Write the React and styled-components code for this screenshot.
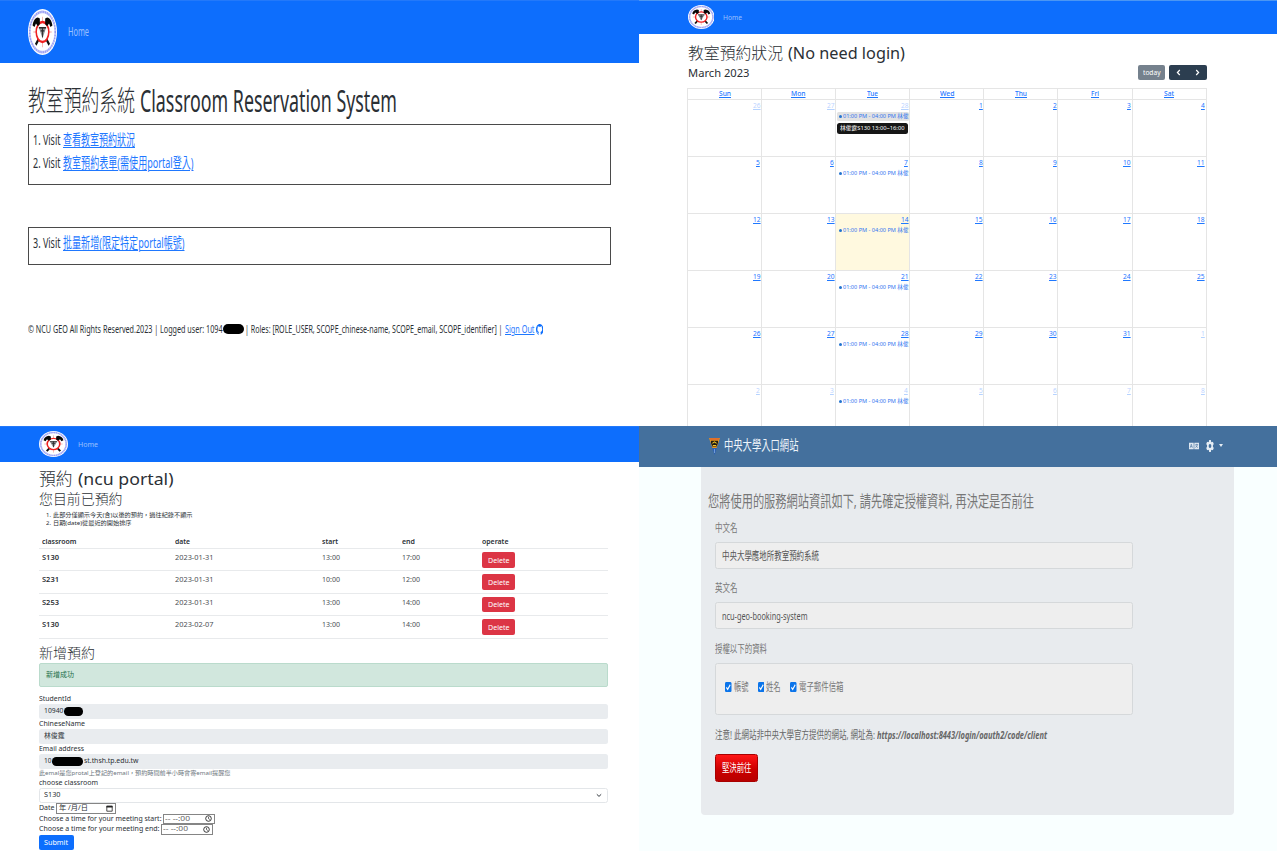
import React, { useLayoutEffect, useRef, useState } from "react";
import styled, { createGlobalStyle, css } from "styled-components";

const Global = createGlobalStyle`
  *, *::before, *::after { box-sizing: border-box; }
  html, body { margin: 0; padding: 0; background: #fff; }
  body {
    width: 1277px;
    height: 851px;
    overflow: hidden;
    font-family: "Noto Sans", "Noto Sans CJK TC", sans-serif;
    color: #2b3035;
  }
`;

/* ---------- text squeezed or stretched to a column width ---------- */

const FitBox = styled.span`
  display: block;
  flex: none;
  width: ${(p) => p.$w}px;
  height: ${(p) => p.$size * 1.4}px;
  margin-left: ${(p) => p.$ml || 0}px;
  font-size: ${(p) => p.$size}px;
  line-height: 1.4;
  white-space: pre;
  color: ${(p) => p.$color || "inherit"};
  font-weight: ${(p) => p.$weight || "inherit"};
  font-style: ${(p) => (p.$italic ? "italic" : "normal")};
`;

const FitInner = styled.span`
  display: inline-block;
  transform-origin: 0 50%;
  ${(p) =>
    p.$link &&
    css`
      text-decoration: underline;
      text-decoration-thickness: ${p.$thick || 1}px;
      text-underline-offset: ${p.$offset || 1}px;
    `}
`;

function Fit({ w, size, ml, color, weight, italic, link, thick, offset, children }) {
  const ref = useRef(null);
  const [scale, setScale] = useState(1);
  useLayoutEffect(() => {
    const node = ref.current;
    const previous = node.style.transform;
    node.style.transform = "none";
    const natural = node.getBoundingClientRect().width;
    node.style.transform = previous;
    if (natural > 0) setScale(w / natural);
  }, [w, size, children]);
  return (
    <FitBox $w={w} $size={size} $ml={ml} $weight={weight} $italic={italic} $color={color || (link ? "#1f78ff" : undefined)}>
      <FitInner ref={ref} $link={link} $thick={thick} $offset={offset} style={{ transform: `scaleX(${scale})` }}>
        {children}
      </FitInner>
    </FitBox>
  );
}

/* ---------- shared parts ---------- */

const Board = styled.main`
  display: grid;
  grid-template-columns: 639px 638px;
  grid-template-rows: 426px 425px;
  width: 1277px;
  height: 851px;
`;

const Panel = styled.section`
  display: flex;
  flex-direction: column;
  min-width: 0;
  overflow: hidden;
  background: ${(p) => p.$bg || "#fff"};
`;

const Nav = styled.nav`
  display: flex;
  flex: none;
  align-items: center;
  height: ${(p) => p.$h}px;
  padding: 0 0 ${(p) => p.$pb || 0}px ${(p) => p.$pad}px;
  background: #0d6efd;
  border-top: 1px solid ${(p) => p.$edge || "#2379fa"};
`;

const Line = styled.div`
  display: flex;
  flex: none;
  align-items: center;
  height: ${(p) => p.$h}px;
  margin-top: ${(p) => p.$mt || 0}px;
  padding-left: ${(p) => p.$pl || 0}px;
`;

const Redacted = styled.span`
  flex: none;
  width: ${(p) => p.$w}px;
  height: ${(p) => p.$h}px;
  border-radius: ${(p) => p.$h / 2}px;
  background: #000;
`;

const Emblem = styled.svg`
  display: block;
  flex: none;
  width: ${(p) => p.$w}px;
  height: ${(p) => p.$h}px;
  margin-right: ${(p) => p.$mr}px;
`;

function Crest({ w, h, mr }) {
  return (
    <Emblem $w={w} $h={h} $mr={mr} viewBox="0 0 60 60" preserveAspectRatio="none">
      <circle cx="30" cy="30" r="30" fill="#fff" />
      <circle cx="30" cy="30" r="26.4" fill="none" stroke="#c3c6fa" strokeWidth="3.6" />
      <circle cx="30" cy="30" r="26.4" fill="none" stroke="#8f95ee" strokeWidth="2.6" strokeDasharray="1.6 2.2" />
      <path d="M30 10v40M11 30h38" stroke="#f3a39b" strokeWidth="1.5" />
      <path d="M19.500 17L44 46.500M40.500 17L16 46.500" stroke="#111" strokeWidth="4" />
      <circle cx="30" cy="30" r="13" fill="#fff" stroke="#f02020" strokeWidth="3.2" />
      <path d="M9.500 21.500c1-5.500 5-10 11-10.500l4 1.500v7l-4 3-4-3.500-3 4.500zM50.500 21.500c-1-5.500-5-10-11-10.500l-4 1.500v7l4 3 4-3.500 3 4.500z" fill="#080808" />
      <path d="M22.500 24h15L30 38.500z" fill="#8b8d90" />
      <path d="M22.500 24.500h15M26.500 28.500h7M30 24v13" stroke="#2a2a2a" strokeWidth="1.8" />
    </Emblem>
  );
}

const HOME = "rgba(255,255,255,.58)";

/* ---------- landing page ---------- */

const LinkBox = styled.div`
  display: flex;
  flex: none;
  flex-direction: column;
  width: 583px;
  height: ${(p) => p.$h}px;
  margin: ${(p) => p.$mt}px 0 0 28px;
  padding: 3px 0 0 4px;
  border: 1px solid #4a4a4a;
`;

const GitMark = styled.svg`
  display: block;
  flex: none;
  width: 7.5px;
  height: 11px;
  margin-left: 1.5px;
`;

const VISITS = [
  ["1. Visit", "查看教室預約狀況", 72],
  ["2. Visit", "教室預約表單(需使用portal登入)", 130.5],
];

function VisitLine({ label, text, w }) {
  return (
    <Line $h={22.6}>
      <Fit w={27.5} size={14.5}>{label}</Fit>
      <Fit w={w} size={14.5} ml={2} link offset={1.5}>{text}</Fit>
    </Line>
  );
}

function Landing() {
  return (
    <Panel>
      <Nav $h={63} $pad={28} $pb={1}>
        <Crest w={29} h={46} mr={11} />
        <Fit w={21} size={13} color={HOME}>Home</Fit>
      </Nav>
      <Line $h={44} $mt={16} $pl={28}>
        <Fit w={107} size={28} weight={300}>教室預約系統</Fit>
        <Fit w={257} size={30} ml={5}>Classroom Reservation System</Fit>
      </Line>
      <LinkBox $h={61} $mt={1}>
        {VISITS.map(([label, text, w]) => (
          <VisitLine key={label} label={label} text={text} w={w} />
        ))}
      </LinkBox>
      <LinkBox $h={38} $mt={42}>
        <VisitLine label="3. Visit" text="批量新增(限定特定portal帳號)" w={121.5} />
      </LinkBox>
      <Line $h={20} $mt={54} $pl={28}>
        <Fit w={194.5} size={11.5}>© NCU GEO All Rights Reserved.2023 | Logged user: 1094</Fit>
        <Redacted $w={21.5} $h={10} />
        <Fit w={257.5} size={11.5} ml={1}>| Roles: [ROLE_USER, SCOPE_chinese-name, SCOPE_email, SCOPE_identifier] |</Fit>
        <Fit w={29.5} size={11.5} ml={2} link>Sign Out</Fit>
        <GitMark viewBox="0 0 16 16" preserveAspectRatio="none">
          <path
            fill="#0d6efd"
            d="M8 0C3.58 0 0 3.58 0 8c0 3.54 2.29 6.53 5.47 7.59.4.07.55-.17.55-.38v-1.49c-2.01.37-2.53-.49-2.69-.94-.09-.23-.48-.94-.82-1.13-.28-.15-.68-.52-.01-.53.63-.01 1.08.58 1.23.82.72 1.21 1.87.87 2.33.66.07-.52.28-.87.51-1.07-1.78-.2-3.64-.89-3.64-3.95 0-.87.31-1.59.82-2.15-.08-.2-.36-1.02.08-2.12 0 0 .67-.21 2.2.82a7.6 7.6 0 0 1 4 0c1.53-1.04 2.2-.82 2.2-.82.44 1.1.16 1.92.08 2.12.51.56.82 1.27.82 2.15 0 3.07-1.87 3.75-3.65 3.95.29.25.54.73.54 1.48v2.2c0 .21.15.46.55.38A8 8 0 0 0 16 8c0-4.42-3.58-8-8-8"
          />
        </GitMark>
      </Line>
    </Panel>
  );
}

/* ---------- calendar page ---------- */

const CalendarBar = styled.div`
  display: flex;
  flex: none;
  align-items: center;
  width: 568px;
  height: 15px;
  padding-left: 48.5px;
`;

const TodayButton = styled.span`
  display: flex;
  align-items: center;
  justify-content: center;
  width: 27px;
  height: 15px;
  margin-left: auto;
  border-radius: 2px;
  background: #75818d;
`;

const ArrowGroup = styled.span`
  display: flex;
  align-items: center;
  justify-content: space-around;
  width: 38px;
  height: 15px;
  margin-left: 4px;
  border-radius: 2px;
  background: #2c3e50;
`;

const Arrow = styled.svg`
  width: 5px;
  height: 7px;
`;

const CalendarGrid = styled.div`
  display: grid;
  flex: none;
  grid-template-columns: repeat(7, 74.1px);
  grid-template-rows: 11px repeat(6, 57px);
  width: 520px;
  margin: 8px 0 0 48px;
  border: solid #e5e5e5;
  border-width: 1px 0 0 1px;
`;

const DayName = styled.div`
  display: flex;
  align-items: center;
  justify-content: center;
  border: solid #e5e5e5;
  border-width: 0 1px 1px 0;
`;

const DayCell = styled.div`
  display: flex;
  flex-direction: column;
  border: solid #e5e5e5;
  border-width: 0 1px 1px 0;
  background: ${(p) => (p.$today ? "#fff9df" : "transparent")};
`;

const DayNumber = styled.div`
  display: flex;
  align-items: center;
  justify-content: flex-end;
  height: 12px;
  padding-right: 1px;
  opacity: ${(p) => (p.$other ? 0.32 : 1)};
`;

const Event = styled.div`
  display: flex;
  align-items: center;
  width: 72px;
  height: 9px;
  margin: 0 0 0 1px;
  padding-left: 1.5px;
  border-radius: 1.5px;
  background: ${(p) => (p.$hover ? "#e2e2e2" : "transparent")};
`;

const Dot = styled.i`
  width: 3px;
  height: 3px;
  border-radius: 50%;
  background: #2273cf;
`;

const Tooltip = styled.div`
  display: flex;
  align-items: center;
  width: 71px;
  height: 11px;
  margin: 2px 0 0 1px;
  padding-left: 3px;
  border-radius: 2.5px;
  background: #161616;
`;

const DAYS = [["Sun", 12], ["Mon", 14.5], ["Tue", 11], ["Wed", 14.5], ["Thu", 12], ["Fri", 8], ["Sat", 10]];
const MONTH = [26, 27, 28, ...Array.from({ length: 31 }, (_, i) => i + 1), 1, 2, 3, 4, 5, 6, 7, 8];

function Calendar() {
  return (
    <Panel>
      <Nav $h={34} $pad={48.5} $edge="#4b96f3" $pb={1}>
        <Crest w={26.5} h={24} mr={9} />
        <Fit w={19} size={7.2} color={HOME}>Home</Fit>
      </Nav>
      <Line $h={24} $mt={7} $pl={48.5}>
        <Fit w={95} size={16} weight={300}>教室預約狀況</Fit>
        <Fit w={117} size={16} ml={5}>(No need login)</Fit>
      </Line>
      <CalendarBar>
        <Fit w={61.5} size={11.4}>March 2023</Fit>
        <TodayButton>
          <Fit w={17.5} size={6.8} color="#fff">today</Fit>
        </TodayButton>
        <ArrowGroup>
          <Arrow viewBox="0 0 5 7"><path d="M3.8 1L1.4 3.5 3.8 6" fill="none" stroke="#fff" strokeWidth="1.2" /></Arrow>
          <Arrow viewBox="0 0 5 7"><path d="M1.2 1l2.4 2.5L1.2 6" fill="none" stroke="#fff" strokeWidth="1.2" /></Arrow>
        </ArrowGroup>
      </CalendarBar>
      <CalendarGrid>
        {DAYS.map(([day, w]) => (
          <DayName key={day}>
            <Fit w={w} size={6.6} link thick={0.7} weight={500}>{day}</Fit>
          </DayName>
        ))}
        {MONTH.map((n, i) => (
          <DayCell key={i} $today={i === 16}>
            <DayNumber $other={i < 3 || i > 33}>
              <Fit w={n > 9 ? 7.6 : 3.8} size={6.8} link thick={0.7}>{String(n)}</Fit>
            </DayNumber>
            {i % 7 === 2 && (
              <Event $hover={i === 2}>
                <Dot />
                <Fit w={65.5} size={5.3} ml={1.2} color="#2f74f0">01:00 PM - 04:00 PM 林俊</Fit>
              </Event>
            )}
            {i === 2 && (
              <Tooltip>
                <Fit w={64.5} size={5.8} color="#fff">林俊霆S130 13:00~16:00</Fit>
              </Tooltip>
            )}
          </DayCell>
        ))}
      </CalendarGrid>
    </Panel>
  );
}

/* ---------- booking form page ---------- */

const Table = styled.div`
  display: flex;
  flex: none;
  flex-direction: column;
  width: 569.5px;
  margin: 6.5px 0 0 38.5px;
`;

const TableRow = styled.div`
  display: grid;
  grid-template-columns: 133.5px 146.5px 80.5px 80px 1fr;
  align-items: ${(p) => (p.$head ? "center" : "start")};
  height: ${(p) => (p.$head ? 15 : 22.4)}px;
  padding: ${(p) => (p.$head ? "1px" : "3px")} 0 0 3px;
  border-bottom: 1px solid #e8eaec;
`;

const DeleteButton = styled.span`
  display: flex;
  align-items: center;
  justify-content: center;
  width: 33px;
  height: 15.5px;
  border-radius: 2px;
  background: #dc3545;
`;

const Alert = styled.div`
  display: flex;
  flex: none;
  align-items: center;
  width: 569.5px;
  height: 24px;
  margin: 1px 0 0 38.5px;
  padding-left: 6.5px;
  border: 1px solid #badbcc;
  border-radius: 2px;
  background: #d1e7dd;
`;

const Field = styled.div`
  display: flex;
  flex: none;
  align-items: center;
  width: 569.5px;
  height: 15.5px;
  margin-left: 38.5px;
  padding: 0 5px 0 ${(p) => (p.$plain ? 4.5 : 5.5)}px;
  border: ${(p) => (p.$plain ? "1px solid #e3e6e9" : "0")};
  border-radius: 2.5px;
  background: ${(p) => (p.$plain ? "#fff" : "#e9ecef")};
`;

const Chevron = styled.svg`
  width: 6px;
  height: 5px;
  margin-left: auto;
`;

const PickerInput = styled.span`
  display: flex;
  flex: none;
  align-items: center;
  justify-content: space-between;
  width: ${(p) => p.$w}px;
  height: 10.5px;
  margin-left: 2px;
  padding: 0 2px 0 1px;
  border: 1px solid #858585;
  background: #fff;
`;

const Glyph = styled.svg`
  width: 7px;
  height: 7px;
`;

const SubmitButton = styled.span`
  display: flex;
  flex: none;
  align-items: center;
  justify-content: center;
  width: 35.5px;
  height: 15px;
  margin-left: 38.5px;
  border-radius: 2px;
  background: #0d6efd;
`;

const BOOKINGS = [
  ["S130", "2023-01-31", "13:00", "17:00"],
  ["S231", "2023-01-31", "10:00", "12:00"],
  ["S253", "2023-01-31", "13:00", "14:00"],
  ["S130", "2023-02-07", "13:00", "14:00"],
];
const COLUMNS = [["classroom", 34.5], ["date", 15], ["start", 16], ["end", 13], ["operate", 26.5]];

function TimeLine({ label, w }) {
  return (
    <Line $h={10.5} $pl={38.5}>
      <Fit w={w} size={7}>{label}</Fit>
      <PickerInput $w={52}>
        <Fit w={25} size={7} color="#666">-- --:00</Fit>
        <Glyph viewBox="0 0 7 7">
          <circle cx="3.5" cy="3.5" r="2.8" fill="none" stroke="#222" strokeWidth=".9" />
          <path d="M3.5 1.8v1.8l1.3.9" fill="none" stroke="#222" strokeWidth=".7" />
        </Glyph>
      </PickerInput>
    </Line>
  );
}

function Booking() {
  return (
    <Panel>
      <Nav $h={36} $pad={38.5} $pb={1.5}>
        <Crest w={29} h={26} mr={10.5} />
        <Fit w={20} size={7.5} color={HOME}>Home</Fit>
      </Nav>
      <Line $h={24} $mt={5} $pl={39}>
        <Fit w={33.5} size={17} weight={300}>預約</Fit>
        <Fit w={95.5} size={17} ml={5}>(ncu portal)</Fit>
      </Line>
      <Line $h={17} $pl={39}>
        <Fit w={83.5} size={13.5} weight={300}>您目前已預約</Fit>
      </Line>
      <Line $h={8.5} $mt={2.5} $pl={46}>
        <Fit w={5} size={6}>1.</Fit>
        <Fit w={139.5} size={6} ml={1.5}>此部分僅顯示今天(含)以後的預約，過往紀錄不顯示</Fit>
      </Line>
      <Line $h={8.5} $pl={46}>
        <Fit w={5} size={6}>2.</Fit>
        <Fit w={78.5} size={6} ml={1.5}>日期(date)從最近的開始排序</Fit>
      </Line>
      <Table>
        <TableRow $head>
          {COLUMNS.map(([name, w]) => (
            <Fit key={name} w={w} size={7.2} weight={600}>{name}</Fit>
          ))}
        </TableRow>
        {BOOKINGS.map(([room, date, start, end], i) => (
          <TableRow key={i}>
            <Fit w={17} size={7.2} weight={600}>{room}</Fit>
            <Fit w={38.5} size={7.2} color="#4a4f54">{date}</Fit>
            <Fit w={18} size={7.2} color="#4a4f54">{start}</Fit>
            <Fit w={18} size={7.2} color="#4a4f54">{end}</Fit>
            <DeleteButton>
              <Fit w={21.5} size={7.2} color="#fff">Delete</Fit>
            </DeleteButton>
          </TableRow>
        ))}
      </Table>
      <Line $h={18} $mt={5.5} $pl={38.5}>
        <Fit w={56} size={13.5} weight={300}>新增預約</Fit>
      </Line>
      <Alert>
        <Fit w={28} size={7} color="#1f6f4a">新增成功</Fit>
      </Alert>
      <Line $h={10} $mt={6.5} $pl={38.5}><Fit w={32} size={7}>StudentId</Fit></Line>
      <Field>
        <Fit w={19.5} size={7}>10940</Fit>
        <Redacted $w={19.5} $h={8.5} />
      </Field>
      <Line $h={9.5} $pl={38.5}><Fit w={46} size={7}>ChineseName</Fit></Line>
      <Field><Fit w={20.5} size={7}>林俊霆</Fit></Field>
      <Line $h={9.5} $pl={38.5}><Fit w={45} size={7}>Email address</Fit></Line>
      <Field>
        <Fit w={7.5} size={7}>10</Fit>
        <Redacted $w={31} $h={8.5} />
        <Fit w={54.5} size={7} ml={1}>st.thsh.tp.edu.tw</Fit>
      </Field>
      <Line $h={8.5} $pl={38.5}>
        <Fit w={191.5} size={6} color="#6c757d">此emal是您protal上登記的email，預約時間前半小時會寄email提醒您</Fit>
      </Line>
      <Line $h={10} $pl={38.5}><Fit w={59} size={7}>choose classroom</Fit></Line>
      <Field $plain>
        <Fit w={16.5} size={7}>S130</Fit>
        <Chevron viewBox="0 0 6 5"><path d="M.8 1.3L3 3.4l2.2-2.1" fill="none" stroke="#343a40" /></Chevron>
      </Field>
      <Line $h={10.5} $pl={38.5}>
        <Fit w={15.5} size={7}>Date</Fit>
        <PickerInput $w={60}>
          <Fit w={29} size={7} ml={1}>年 /月/日</Fit>
          <Glyph viewBox="0 0 7 7">
            <path d="M.8 1.2h5.4v5H.8z" fill="none" stroke="#222" strokeWidth=".8" />
            <path d="M.5.8h6v1.7h-6z" fill="#222" />
          </Glyph>
        </PickerInput>
      </Line>
      <TimeLine label="Choose a time for your meeting start:" w={122.5} />
      <TimeLine label="Choose a time for your meeting end:" w={120.5} />
      <SubmitButton>
        <Fit w={24} size={7.2} color="#fff">Submit</Fit>
      </SubmitButton>
    </Panel>
  );
}

/* ---------- portal consent page ---------- */

const PortalNav = styled.nav`
  display: flex;
  flex: none;
  align-items: center;
  height: 41px;
  padding: 0 54px 3px 70px;
  background: #44709d;
`;

const Pennant = styled.svg`
  width: 11px;
  height: 18px;
  margin: 3px 3.5px 0 0;
`;

const PortalTools = styled.div`
  display: flex;
  align-items: center;
  margin-left: auto;
  padding-top: 1px;
`;

const ToolIcon = styled.svg`
  display: block;
  width: ${(p) => p.$w}px;
  height: ${(p) => p.$h}px;
  margin-left: ${(p) => p.$ml || 0}px;
`;

const Well = styled.div`
  display: flex;
  flex: none;
  flex-direction: column;
  width: 533px;
  height: 348px;
  margin-left: 62px;
  padding-left: 14px;
  border-radius: 0 0 4px 4px;
  background: #e8ebee;
  color: #777;
`;

const Heading = styled.div`
  display: flex;
  align-items: center;
  height: 30px;
  margin: 19px 0 0 -7px;
`;

const ReadOnly = styled.div`
  display: flex;
  flex: none;
  align-items: center;
  width: 418px;
  height: ${(p) => p.$h}px;
  padding: 0 0 ${(p) => p.$pb || 0}px ${(p) => p.$pl}px;
  border: 1px solid #d5d8da;
  border-radius: 2.5px;
  background: #eee;
  color: #555;
`;

const Check = styled.svg`
  display: block;
  flex: none;
  width: 6.5px;
  height: 10px;
  margin: 0 2px 0 ${(p) => p.$ml || 0}px;
`;

const GoButton = styled.span`
  display: flex;
  flex: none;
  align-items: center;
  justify-content: center;
  width: 42.5px;
  height: 27.5px;
  margin-top: 7px;
  border: 1px solid #a80000;
  border-radius: 2.5px;
  background: linear-gradient(#ff1616, #cc0000 55%, #b80000);
`;

const SCOPES = [["帳號", 14.5, 0], ["姓名", 14.5, 9.5], ["電子郵件信箱", 44.5, 9.5]];

function Portal() {
  return (
    <Panel $bg="#f9ffff">
      <PortalNav>
        <Pennant viewBox="0 0 11 18">
          <path d="M0 0h11L7.5 10h-4z" fill="#e8961c" />
          <path d="M.5 0h10l-.7 2H1.2z" fill="#e0702a" />
          <path d="M2 2.8h7v2L7.6 8.500H3.4L2 5z" fill="#1c1a12" />
          <path d="M3.4 5.4l2.1-1.500 2.100 1.500M3.800 7.500h3.400" stroke="#f5c826" fill="none" strokeWidth="1.1" />
          <path d="M3.3 10h4.4L5.6 17z" fill="#2c5fb4" />
          <path d="M5.5 11v4" stroke="#8db6e8" strokeWidth=".7" />
        </Pennant>
        <Fit w={74.5} size={13.5} color="#eef4fa">中央大學入口網站</Fit>
        <PortalTools>
          <ToolIcon $w={10} $h={8} viewBox="0 0 10 8">
            <path d="M0 .8h4.7V7.2H0zM5.3.8H10V7.2H5.3z" fill="#dfe8f1" />
            <path d="M1.2 5.8l1.1-3.6 1.1 3.6M1.6 4.6h1.5M6.3 2.6h2.8M7.7 1.8v.9M6.5 5.8l2.1-3M6.8 3.4l2 2.4" stroke="#44709d" strokeWidth=".6" fill="none" />
          </ToolIcon>
          <ToolIcon $w={8} $h={12} $ml={7} viewBox="0 0 16 16" preserveAspectRatio="none">
            <path
              fill="#e6edf4"
              fillRule="evenodd"
              d="M6.3 0h3.4l.5 2.3 1.4.8L13.8 2.4l1.7 2.9L13.9 7v2l1.6 1.7-1.7 2.9-2.2-.7-1.4.8L9.7 16H6.3l-.5-2.3-1.4-.8-2.2.7L.5 10.7 2.1 9V7L.5 5.300l1.700-2.900 2.200.7 1.400-.8zM8 5.300a2.700 2.700 0 1 0 0 5.400 2.700 2.700 0 0 0 0-5.400z"
            />
          </ToolIcon>
          <ToolIcon $w={4} $h={3} $ml={5} viewBox="0 0 4 3"><path d="M0 0h4L2 3z" fill="#e6edf4" /></ToolIcon>
        </PortalTools>
      </PortalNav>
      <Well>
        <Heading>
          <Fit w={326} size={16}>您將使用的服務網站資訊如下, 請先確定授權資料, 再決定是否前往</Fit>
        </Heading>
        <Line $h={24}><Fit w={22.5} size={10.8}>中文名</Fit></Line>
        <Line $h={2} />
        <ReadOnly $h={27} $pl={5.5}><Fit w={97} size={10.8}>中央大學應地所教室預約系統</Fit></ReadOnly>
        <Line $h={24} $mt={7}><Fit w={22.5} size={10.8}>英文名</Fit></Line>
        <Line $h={2} />
        <ReadOnly $h={27} $pl={5.5}><Fit w={85.5} size={11.2}>ncu-geo-booking-system</Fit></ReadOnly>
        <Line $h={24} $mt={8}><Fit w={52} size={10.8}>授權以下的資料</Fit></Line>
        <Line $h={2} />
        <ReadOnly $h={52} $pl={9} $pb={5}>
          {SCOPES.map(([name, w, ml]) => (
            <React.Fragment key={name}>
              <Check $ml={ml} viewBox="0 0 13 13" preserveAspectRatio="none">
                <rect width="13" height="13" rx="2" fill="#0b74ea" />
                <path d="M2.8 7l2.6 2.6 5-6" fill="none" stroke="#fff" strokeWidth="2" />
              </Check>
              <Fit w={w} size={10.8} color="#777">{name}</Fit>
            </React.Fragment>
          ))}
        </ReadOnly>
        <Line $h={24} $mt={8}>
          <Fit w={160} size={10.8} color="#666">注意! 此網站非中央大學官方提供的網站, 網址為:</Fit>
          <Fit w={170} size={11} ml={2} color="#666" weight={700} italic>https://localhost:8443/login/oauth2/code/client</Fit>
        </Line>
        <GoButton><Fit w={29.5} size={10.8} color="#fff">堅決前往</Fit></GoButton>
      </Well>
    </Panel>
  );
}

export default function App() {
  return (
    <>
      <Global />
      <Board>
        <Landing />
        <Calendar />
        <Booking />
        <Portal />
      </Board>
    </>
  );
}
